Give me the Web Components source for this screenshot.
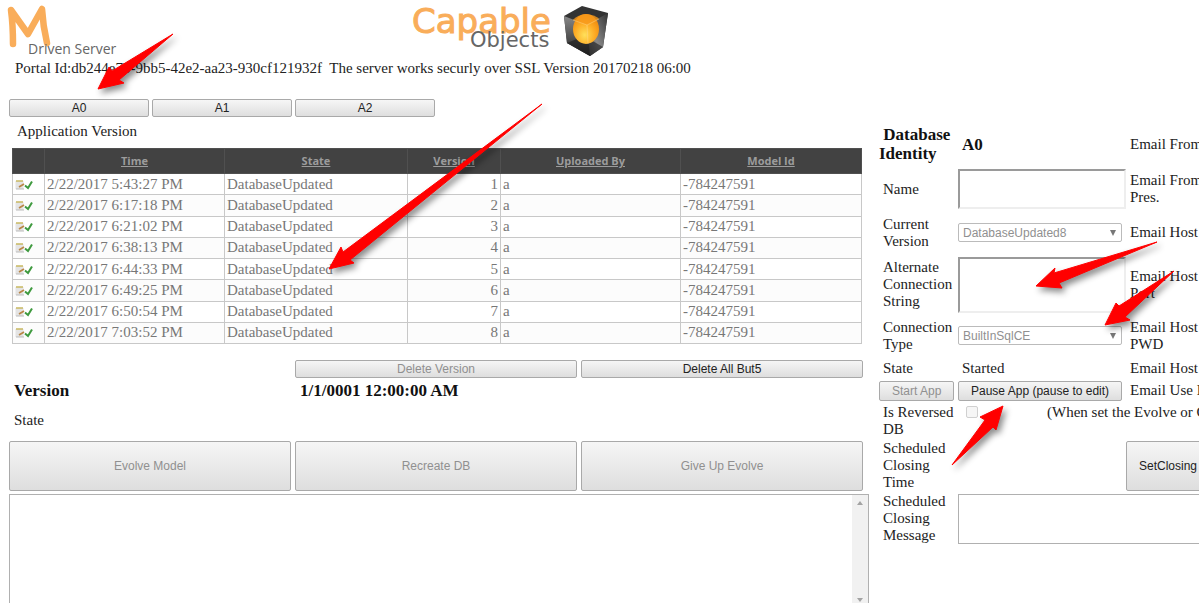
<!DOCTYPE html>
<html lang="en">
<head>
<meta charset="utf-8">
<title>MDriven Server</title>
<style>
    body {
        margin: 0;
        background: #fff;
        color: #222;
        font: 15px/17px "Liberation Serif", serif;
        height: 100vh;
        overflow: hidden;
    }
</style>
</head>
<body>
<server-portal></server-portal>
<pointer-arrows></pointer-arrows>

<script>
class ActionButton extends HTMLElement {
    constructor() {
        super();
        this.attachShadow({mode: 'open'});
    }

    connectedCallback() {
        const disabled = this.hasAttribute('disabled') ? 'disabled' : '';
        this.shadowRoot.innerHTML = `
            <style>
                :host {
                    display: grid;
                    min-height: 18px;
                }
                :host([tall]) {
                    min-height: 50px;
                }
                button {
                    box-sizing: border-box;
                    width: 100%;
                    padding: 0 12px;
                    border: 1px solid #a9a9a9;
                    border-radius: 2px;
                    background: linear-gradient(#f6f6f6, #dedede);
                    color: #222;
                    font: 12px/14px "Liberation Sans", sans-serif;
                    white-space: nowrap;
                }
                button:disabled {
                    color: #909090;
                }
                :host([start]) button {
                    text-align: left;
                }
            </style>
            <button type="button" ${disabled}><slot></slot></button>`;
    }
}

class PortalHeader extends HTMLElement {
    constructor() {
        super();
        this.attachShadow({mode: 'open'});
        this.shadowRoot.innerHTML = `
            <style>
                :host {
                    display: block;
                }
                .logos {
                    display: flex;
                    gap: 280px;
                    height: 60px;
                }
                svg {
                    display: block;
                    overflow: visible;
                }
                p {
                    margin: 0;
                    padding-left: 15px;
                    white-space: pre;
                }
            </style>
            <div class="logos">
                <svg width="130" height="58" viewBox="0 0 130 58" role="img" aria-label="M Driven Server">
                    <path d="M13 44 Q13 25 11 10 L28 34 L42 9 Q43 26 47 43" fill="none" stroke="#f9ad5a" stroke-width="6.500" stroke-linecap="round" stroke-linejoin="round"/>
                    <text x="28" y="54" font-family="Open Sans, sans-serif" font-size="14" fill="#666">Driven Server</text>
                </svg>
                <svg width="200" height="58" viewBox="0 0 200 58" role="img" aria-label="Capable Objects">
                    <defs>
                        <radialGradient id="ball" cx=".45" cy=".7" r=".65">
                            <stop offset="0" stop-color="#ffe05a"/>
                            <stop offset=".6" stop-color="#fdab24"/>
                            <stop offset="1" stop-color="#f08c10"/>
                        </radialGradient>
                        <linearGradient id="side" x1="0" y1="0" x2="0" y2="1">
                            <stop offset="0" stop-color="#888"/>
                            <stop offset="1" stop-color="#222"/>
                        </linearGradient>
                        <linearGradient id="front" x1="1" y1="0" x2="0" y2="1">
                            <stop offset="0" stop-color="#333"/>
                            <stop offset=".6" stop-color="#888"/>
                            <stop offset="1" stop-color="#444"/>
                        </linearGradient>
                    </defs>
                    <text x="2" y="33" font-family="DejaVu Sans, sans-serif" font-size="34" fill="#f9ad5a" stroke="#f9ad5a">Capable</text>
                    <text x="60" y="47" font-family="DejaVu Sans, sans-serif" font-size="21" fill="#666">Objects</text>
                    <path d="M154 16 L172 6 L198 13 L193 47 L180 56 L157 43 Z" fill="#333"/>
                    <path d="M154 16 L177 25 L180 56 L157 43 Z" fill="url(#side)"/>
                    <path d="M177 25 L198 13 L193 47 L180 56 Z" fill="url(#front)"/>
                    <path d="M157 43 L174 36 L193 47 L180 56 Z" fill="#1d1d1d" opacity=".6"/>
                    <ellipse cx="176" cy="29" rx="13" ry="15" fill="url(#ball)"/>
                    <path d="M163 20 Q167 15 176 14 Q186 15 189 19 L177 25 Z" fill="#f79a1c" opacity=".8"/>
                    <path d="M163 20 L177 25 L189 19 M177 25 L178 44" fill="none" stroke="#ffd98a" stroke-width=".7" opacity=".7"/>
                </svg>
            </div>
            <p>Portal Id:db244e7b-9bb5-42e2-aa23-930cf121932f  The server works securly over SSL Version 20170218 06:00</p>`;
    }
}

class VersionTable extends HTMLElement {
    constructor() {
        super();
        this.attachShadow({mode: 'open'});
        this.times = ['5:43:27', '6:17:18', '6:21:02', '6:38:13', '6:44:33', '6:49:25', '6:50:54', '7:03:52'];
    }

    connectedCallback() {
        const heads = ['Time', 'State', 'Version', 'Uploaded By', 'Model Id'].map(name => `<th><a href="#">${name}</a></th>`).join('');

        const rows = this.times.map((time, index) => `
            <tr>
                <td class="icon">
                    <svg width="18" height="11" viewBox="0 0 18 11">
                        <rect x=".5" y="2" width="8" height="8" fill="#e4e4e4"/>
                        <path d="M1 2h7" stroke="#c9b861" stroke-width="1.500"/>
                        <path d="M1 10h8" stroke="#bbb"/>
                        <path d="M4 8l5-3" stroke="#b98545" stroke-width="1.800"/>
                        <path d="M10 6.500l3 2.500 4-6.500" fill="none" stroke="#3f9a3f" stroke-width="2"/>
                    </svg>
                </td>
                <td>2/22/2017 ${time} PM</td>
                <td>DatabaseUpdated</td>
                <td class="number">${index + 1}</td>
                <td>a</td>
                <td>-784247591</td>
            </tr>`).join('');

        this.shadowRoot.innerHTML = `
            <style>
                :host {
                    display: block;
                }
                table {
                    width: 100%;
                    height: 196px;
                    border-collapse: collapse;
                    table-layout: fixed;
                    color: #777;
                }
                .tick { width: 32px; }
                .wide { width: 180px; }
                .state { width: 183px; }
                .slim { width: 93px; }
                th {
                    height: 24px;
                    padding: 0;
                    border: 1px solid #505050;
                    background: #424242;
                    font: bold 11px/16px "Open Sans", sans-serif;
                }
                th a {
                    color: #9c9c9c;
                }
                td {
                    padding: 0 2px;
                    border: 1px solid #c8c8c8;
                    white-space: nowrap;
                }
                tbody tr:nth-child(even) {
                    background: #fcfcfc;
                }
                .number {
                    text-align: right;
                }
                svg {
                    display: block;
                }
            </style>
            <table>
                <colgroup><col class="tick"><col class="wide"><col class="state"><col class="slim"><col class="wide"><col></colgroup>
                <thead><tr><th></th>${heads}</tr></thead>
                <tbody>${rows}</tbody>
            </table>`;
    }
}

class VersionPanel extends HTMLElement {
    constructor() {
        super();
        this.attachShadow({mode: 'open'});
        this.shadowRoot.innerHTML = `
            <style>
                :host {
                    display: block;
                    padding-left: 9px;
                }
                .tabs {
                    display: grid;
                    grid-template-columns: repeat(3, 140px);
                    gap: 3px;
                    padding: 22px 0 6px;
                }
                .caption {
                    padding-left: 8px;
                }
                version-table {
                    margin: 8px 7px 16px 3px;
                }
                .thirds {
                    display: grid;
                    grid-template-columns: repeat(3, minmax(0, 1fr));
                    gap: 4px;
                    padding-right: 6px;
                }
                .second {
                    grid-column-start: 2;
                }
                h2 {
                    margin: 0;
                    padding: 0 5px;
                    font-size: 17px;
                    line-height: 18px;
                    color: #111;
                }
                .state {
                    padding: 12px 5px;
                }
                .log {
                    display: grid;
                    grid-template-columns: 1fr 16px;
                    margin-top: 3px;
                    height: 115px;
                    box-sizing: border-box;
                    border: 1px solid #b0b0b0;
                }
                textarea {
                    display: block;
                    border: 0;
                    padding: 2px;
                    resize: none;
                    outline: 0;
                    overflow: hidden;
                }
                .bar {
                    display: flex;
                    flex-direction: column;
                    justify-content: space-between;
                    align-items: center;
                    padding: 6px 0;
                    background: #f1f1f1;
                }
                .bar svg {
                    display: block;
                }
            </style>
            <div class="tabs">
                <action-button>A0</action-button>
                <action-button>A1</action-button>
                <action-button>A2</action-button>
            </div>
            <div class="caption">Application Version</div>
            <version-table></version-table>
            <div class="thirds">
                <action-button class="second" disabled>Delete Version</action-button>
                <action-button>Delete All But5</action-button>
                <h2>Version</h2>
                <h2>1/1/0001 12:00:00 AM</h2>
            </div>
            <div class="state">State</div>
            <div class="thirds">
                <action-button tall disabled>Evolve Model</action-button>
                <action-button tall disabled>Recreate DB</action-button>
                <action-button tall disabled>Give Up Evolve</action-button>
            </div>
            <div class="log">
                <textarea aria-label="Evolve log"></textarea>
                <div class="bar">
                    <svg width="6" height="4"><path d="M0 4l3-4 3 4z" fill="#a3a3a3"/></svg>
                    <svg width="6" height="4"><path d="M0 0l3 4 3-4z" fill="#a3a3a3"/></svg>
                </div>
            </div>`;
    }
}

class DropDown extends HTMLElement {
    constructor() {
        super();
        this.attachShadow({mode: 'open'});
    }

    connectedCallback() {
        this.shadowRoot.innerHTML = `
            <style>
                :host {
                    display: grid;
                    align-items: center;
                }
                select, svg {
                    grid-area: 1 / 1;
                }
                select {
                    appearance: none;
                    box-sizing: border-box;
                    width: 100%;
                    height: 19px;
                    padding: 0 4px;
                    border: 1px solid #bbb;
                    border-radius: 2px;
                    background: #fff;
                    color: #909090;
                    opacity: 1;
                    font: 12px/14px "Liberation Sans", sans-serif;
                }
                svg {
                    justify-self: end;
                    margin-right: 6px;
                }
            </style>
            <select disabled aria-label="${this.getAttribute('label')}"><option>${this.getAttribute('value')}</option></select>
            <svg width="6" height="6"><path d="M0 0h6l-3 6z" fill="#777"/></svg>`;
    }
}

class DatabasePanel extends HTMLElement {
    constructor() {
        super();
        this.attachShadow({mode: 'open'});
        this.shadowRoot.innerHTML = `
            <style>
                :host {
                    display: grid;
                    grid-template-columns: 75px 164px 120px;
                    grid-template-rows: 48px 42px 45px 59px 43px 22px 23px 37px 53px 53px;
                    column-gap: 4px;
                    align-items: center;
                    align-content: start;
                    padding-top: 43px;
                }
                h2 {
                    margin: 0;
                    font-size: 17px;
                    line-height: 19px;
                    color: #111;
                }
                .value {
                    padding-left: 4px;
                }
                label, .label {
                    padding-left: 4px;
                }
                .email {
                    padding-left: 4px;
                    white-space: nowrap;
                }
                .box {
                    box-sizing: border-box;
                    width: 168px;
                    height: 40px;
                    padding: 2px;
                    border: 2px solid;
                    border-color: #9a9a9a #eee #eee #9a9a9a;
                    background: #fff;
                    resize: none;
                }
                .box.high {
                    height: 56px;
                }
                action-button {
                    min-height: 20px;
                }
                action-button[tall] {
                    min-height: 50px;
                }
                .reversed {
                    grid-column: 2 / 4;
                    align-self: start;
                    display: flex;
                    gap: 69px;
                    padding: 2px 0 0 8px;
                    white-space: nowrap;
                }
                input[type=checkbox] {
                    appearance: none;
                    box-sizing: border-box;
                    flex: none;
                    width: 12px;
                    height: 12px;
                    margin: 2px 0 0;
                    border: 1px solid #d0d0d0;
                    border-radius: 2px;
                    background: #f6f6f6;
                }
                .message {
                    grid-column: 2 / 4;
                    width: 100%;
                    height: 50px;
                    box-sizing: border-box;
                    border: 1px solid #b0b0b0;
                    resize: none;
                }
            </style>
            <h2>&nbsp;Database Identity</h2>
            <h2 class="value">A0</h2>
            <div class="email">Email From</div>

            <label for="name">Name</label>
            <input class="box" id="name">
            <div class="email">Email From<br>Pres.</div>

            <div class="label">Current Version</div>
            <drop-down label="Current Version" value="DatabaseUpdated8"></drop-down>
            <div class="email">Email Host</div>

            <label for="connection">Alternate Connection String</label>
            <textarea class="box high" id="connection"></textarea>
            <div class="email">Email Host<br>Port</div>

            <div class="label">Connection Type</div>
            <drop-down label="Connection Type" value="BuiltInSqlCE"></drop-down>
            <div class="email">Email Host<br>PWD</div>

            <div class="label">State</div>
            <div class="value">Started</div>
            <div class="email">Email Host</div>

            <action-button disabled>Start App</action-button>
            <action-button>Pause App (pause to edit)</action-button>
            <div class="email">Email Use D</div>

            <label for="reversed">Is Reversed DB</label>
            <div class="reversed">
                <input type="checkbox" id="reversed" disabled>
                <span>(When set the Evolve or C</span>
            </div>

            <div class="label">Scheduled Closing Time</div>
            <div></div>
            <action-button tall start>SetClosing</action-button>

            <label for="message">Scheduled Closing Message</label>
            <textarea class="message" id="message"></textarea>`;
    }
}

class ServerPortal extends HTMLElement {
    constructor() {
        super();
        this.attachShadow({mode: 'open'});
        this.shadowRoot.innerHTML = `
            <style>
                :host {
                    display: block;
                }
                main {
                    display: grid;
                    grid-template-columns: minmax(0, 1fr) 320px;
                    column-gap: 10px;
                }
            </style>
            <portal-header></portal-header>
            <main>
                <version-panel></version-panel>
                <database-panel></database-panel>
            </main>`;
    }
}

// Red arrows that lie over the page
class PointerArrows extends HTMLElement {
    constructor() {
        super();
        this.attachShadow({mode: 'open'});
        this.shadowRoot.innerHTML = `
            <style>
                :host {
                    position: absolute;
                    top: 0;
                    left: 0;
                    pointer-events: none;
                }
                svg {
                    display: block;
                    overflow: visible;
                    fill: #f00;
                    stroke: #f00;
                    stroke-linejoin: round;
                    filter: drop-shadow(3px 4px 3px rgba(0, 0, 0, .45));
                }
            </style>
            <svg width="1" height="1">
                <path d="M98 89L109 67 112 71 173 34 119 80 124 83Z"/>
                <path d="M329 269L341 247 343 252 542 104 350 260 354 263Z"/>
                <path d="M1036 286L1055 268 1054 273 1157 242 1059 283 1062 288Z"/>
                <path d="M1105 325L1116 303 1119 306 1174 271 1125 317 1130 320Z"/>
                <path d="M1003 406L980 417 985 420 952 465 993 427 996 430Z"/>
            </svg>`;
    }
}

customElements.define('action-button', ActionButton);
customElements.define('portal-header', PortalHeader);
customElements.define('version-table', VersionTable);
customElements.define('version-panel', VersionPanel);
customElements.define('drop-down', DropDown);
customElements.define('database-panel', DatabasePanel);
customElements.define('server-portal', ServerPortal);
customElements.define('pointer-arrows', PointerArrows);
</script>
</body>
</html>
